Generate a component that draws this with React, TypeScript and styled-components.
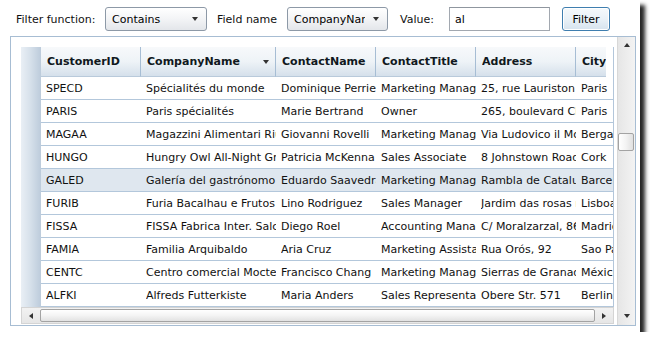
import React from "react";
import styled, { createGlobalStyle } from "styled-components";

const Global = createGlobalStyle`
  html, body { margin: 0; padding: 0; background: #ffffff; }
  body { font-family: "DejaVu Sans", Verdana, sans-serif; color: #000; }
  * { box-sizing: border-box; }
`;

const Window = styled.div`
  width: 640px;
  height: 332px;
  background: #ffffff;
  box-shadow: 5px 5px 4px rgba(0, 0, 0, 0.85);
  display: flex;
  flex-direction: column;
`;

const Toolbar = styled.div`
  display: flex;
  align-items: center;
  height: 24px;
  margin-top: 7px;
  padding-left: 16px;
`;

const Label = styled.span<{ $w: number; $ml?: number }>`
  width: ${(p) => p.$w}px;
  margin-left: ${(p) => p.$ml ?? 0}px;
  font-size: 11px;
  color: #111;
  white-space: nowrap;
`;

const Combo = styled.div<{ $w: number }>`
  width: ${(p) => p.$w}px;
  height: 24px;
  border: 1px solid #8d99a7;
  border-radius: 3px;
  background: linear-gradient(#ffffff 0%, #f3f4f6 50%, #e3e6ea 100%);
  display: flex;
  align-items: center;
  padding-left: 6px;
  font-size: 11px;
  overflow: hidden;
`;

const ComboText = styled.span`
  flex: 1;
  min-width: 0;
  white-space: nowrap;
  overflow: hidden;
`;

const Arrow = styled.span<{ $dir: "down" | "up" | "left" | "right" }>`
  width: 0;
  height: 0;
  flex: none;
  ${(p) =>
    p.$dir === "down"
      ? "border-left:3.5px solid transparent;border-right:3.5px solid transparent;border-top:4px solid #333;"
      : p.$dir === "up"
      ? "border-left:3.5px solid transparent;border-right:3.5px solid transparent;border-bottom:4px solid #333;"
      : p.$dir === "left"
      ? "border-top:3.5px solid transparent;border-bottom:3.5px solid transparent;border-right:4px solid #333;"
      : "border-top:3.5px solid transparent;border-bottom:3.5px solid transparent;border-left:4px solid #333;"}
`;

const ComboArrowBox = styled.span`
  width: 22px;
  flex: none;
  display: flex;
  justify-content: center;
  align-items: center;
`;

const TextBox = styled.div`
  width: 101px;
  height: 24px;
  border: 1px solid #a2a8b0;
  border-top-color: #8f969f;
  background: #fff;
  display: flex;
  align-items: center;
  padding-left: 5px;
  font-size: 11px;
`;

const Button = styled.div`
  margin-left: 12px;
  width: 48px;
  height: 24px;
  border: 1px solid #3f7eaf;
  border-radius: 3px;
  background: linear-gradient(#f5f9fc 0%, #e9f1f7 50%, #d6e3ee 100%);
  box-shadow: inset 0 0 0 1px #ffffff;
  display: flex;
  align-items: center;
  justify-content: center;
  font-size: 11px;
`;

const GridFrame = styled.div`
  margin: 5px 0 0 10px;
  width: 626px;
  height: 290px;
  border: 1px solid #a7bdd3;
  display: flex;
`;

const Content = styled.div`
  flex: 1;
  min-width: 0;
  padding: 10px 3px 1px 10px;
  display: flex;
  flex-direction: column;
`;

const DataArea = styled.div`
  flex: 1;
  min-height: 0;
  overflow: hidden;
  border-right: 1px solid #b3c6da;
`;

const HeaderRow = styled.div`
  display: flex;
  height: 30px;
  margin-right: 7px;
  overflow: hidden;
`;

const RowHeader = styled.div`
  width: 20px;
  flex: none;
  background: linear-gradient(to right, #e9eff5 0%, #d7e1eb 45%, #bccbdb 100%);
`;

const HeaderCell = styled.div<{ $w: number }>`
  width: ${(p) => p.$w}px;
  flex: none;
  height: 30px;
  background: linear-gradient(#f7f9fb 0%, #eef3f7 50%, #d5e0eb 100%);
  border-right: 1px solid #a6bdd4;
  border-bottom: 1px solid #b9cadb;
  display: flex;
  align-items: center;
  padding-left: 6px;
  padding-right: 6px;
  font-size: 11px;
  font-weight: bold;
  color: #101820;
  white-space: nowrap;
  overflow: hidden;
`;

const HeaderText = styled.span`
  flex: 1;
  min-width: 0;
  overflow: hidden;
`;

const Row = styled.div<{ $sel?: boolean }>`
  display: flex;
  height: 23px;
  background: ${(p) => (p.$sel ? "#dfe7ef" : "#ffffff")};
`;

const Cell = styled.div<{ $w: number }>`
  width: ${(p) => p.$w}px;
  flex: none;
  height: 23px;
  border-bottom: 1px solid #b3c7db;
  display: flex;
  align-items: center;
  padding-left: 5px;
  font-size: 11px;
  color: #111;
  overflow: hidden;
`;

const CellText = styled.span`
  display: block;
  flex: 1;
  min-width: 0;
  white-space: nowrap;
  overflow: hidden;
`;

const HScroll = styled.div`
  height: 17px;
  display: flex;
  align-items: stretch;
  background: linear-gradient(#f2f2f2, #e6e6e6);
  border: 1px solid #d4d4d4;
`;

const ScrollBtn = styled.div<{ $w?: number; $h?: number }>`
  width: ${(p) => (p.$w ? p.$w + "px" : "auto")};
  height: ${(p) => (p.$h ? p.$h + "px" : "auto")};
  flex: none;
  display: flex;
  align-items: center;
  justify-content: center;
`;

const HThumb = styled.div`
  flex: 1;
  margin: 1px 0;
  border: 1px solid #a3a3a3;
  border-radius: 2px;
  background: linear-gradient(#ffffff 0%, #f4f4f4 50%, #e2e2e2 100%);
`;

const VScroll = styled.div`
  width: 18px;
  flex: none;
  display: flex;
  flex-direction: column;
  background: linear-gradient(to right, #e6e6e6, #f3f3f3);
  border-left: 1px solid #d8d8d8;
`;

const VTrack = styled.div`
  flex: 1;
`;

const VThumb = styled.div`
  margin: 80px 1px 0 0;
  height: 18px;
  border: 1px solid #a3a3a3;
  border-radius: 2px;
  background: linear-gradient(to right, #ffffff 0%, #f3f3f3 50%, #e0e0e0 100%);
`;

const columns = [
  { title: "CustomerID", w: 100 },
  { title: "CompanyName", w: 135, arrow: true },
  { title: "ContactName", w: 100 },
  { title: "ContactTitle", w: 100 },
  { title: "Address", w: 100 },
  { title: "City", w: 100 },
];

const rows: string[][] = [
  ["SPECD", "Spécialités du monde", "Dominique Perrier", "Marketing Manager", "25, rue Lauriston", "Paris"],
  ["PARIS", "Paris spécialités", "Marie Bertrand", "Owner", "265, boulevard Charonne", "Paris"],
  ["MAGAA", "Magazzini Alimentari Riuniti", "Giovanni Rovelli", "Marketing Manager", "Via Ludovico il Moro 22", "Bergamo"],
  ["HUNGO", "Hungry Owl All-Night Grocers", "Patricia McKenna", "Sales Associate", "8 Johnstown Road", "Cork"],
  ["GALED", "Galería del gastrónomo", "Eduardo Saavedra", "Marketing Manager", "Rambla de Cataluña, 23", "Barcelona"],
  ["FURIB", "Furia Bacalhau e Frutos do Mar", "Lino Rodriguez", "Sales Manager", "Jardim das rosas n. 32", "Lisboa"],
  ["FISSA", "FISSA Fabrica Inter. Salchichas S.A.", "Diego Roel", "Accounting Manager", "C/ Moralzarzal, 86", "Madrid"],
  ["FAMIA", "Familia Arquibaldo", "Aria Cruz", "Marketing Assistant", "Rua Orós, 92", "Sao Paulo"],
  ["CENTC", "Centro comercial Moctezuma", "Francisco Chang", "Marketing Manager", "Sierras de Granada 9993", "México D.F."],
  ["ALFKI", "Alfreds Futterkiste", "Maria Anders", "Sales Representative", "Obere Str. 571", "Berlin"],
];

export default function App() {
  return (
    <>
      <Global />
      <Window>
        <Toolbar>
          <Label $w={89}>Filter function:</Label>
          <Combo $w={102}>
            <ComboText>Contains</ComboText>
            <ComboArrowBox>
              <Arrow $dir="down" />
            </ComboArrowBox>
          </Combo>
          <Label $w={70} $ml={10}>Field name</Label>
          <Combo $w={101}>
            <ComboText>CompanyNar</ComboText>
            <ComboArrowBox>
              <Arrow $dir="down" />
            </ComboArrowBox>
          </Combo>
          <Label $w={49} $ml={12}>Value:</Label>
          <TextBox>al</TextBox>
          <Button>Filter</Button>
        </Toolbar>
        <GridFrame>
          <Content>
            <DataArea>
              <HeaderRow>
                <RowHeader />
                {columns.map((c) => (
                  <HeaderCell key={c.title} $w={c.w}>
                    <HeaderText>{c.title}</HeaderText>
                    {c.arrow && <Arrow $dir="down" />}
                  </HeaderCell>
                ))}
              </HeaderRow>
              {rows.map((r) => (
                <Row key={r[0]} $sel={r[0] === "GALED"}>
                  <RowHeader />
                  {r.map((v, i) => (
                    <Cell key={i} $w={columns[i].w}>
                      <CellText>{v}</CellText>
                    </Cell>
                  ))}
                </Row>
              ))}
            </DataArea>
            <HScroll>
              <ScrollBtn $w={18}>
                <Arrow $dir="left" />
              </ScrollBtn>
              <HThumb />
              <ScrollBtn $w={18}>
                <Arrow $dir="right" />
              </ScrollBtn>
            </HScroll>
          </Content>
          <VScroll>
            <ScrollBtn $h={16}>
              <Arrow $dir="up" />
            </ScrollBtn>
            <VTrack>
              <VThumb />
            </VTrack>
            <ScrollBtn $h={18}>
              <Arrow $dir="down" />
            </ScrollBtn>
          </VScroll>
        </GridFrame>
      </Window>
    </>
  );
}
